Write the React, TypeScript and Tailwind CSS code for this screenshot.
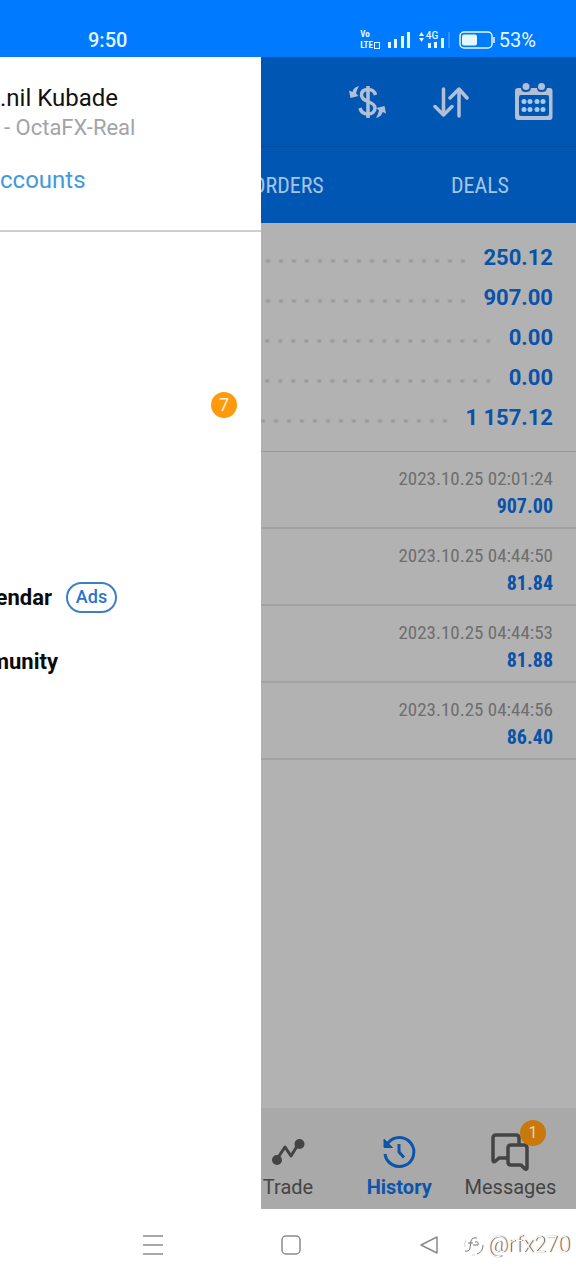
import type { ReactNode } from "react";
import { clsx } from "clsx";

const SUMMARY = ["250.12", "907.00", "0.00", "0.00", "1 157.12"];

const DEALS = [
  { time: "2023.10.25 02:01:24", amount: "907.00" },
  { time: "2023.10.25 04:44:50", amount: "81.84" },
  { time: "2023.10.25 04:44:53", amount: "81.88" },
  { time: "2023.10.25 04:44:56", amount: "86.40" },
];

const CONDENSED = "font-['Roboto_Condensed','Liberation_Sans_Narrow',Roboto,sans-serif]";

function StatusBar() {
  return (
    <div className="flex h-[57px] items-end justify-between bg-[#007aff] pr-10 pb-[5px] pl-[88px] text-[#e6f8ff]">
      <span className="text-xl leading-6 font-medium">9:50</span>
      <div className="flex items-center gap-2">
        <div className={clsx("flex flex-col text-[9px] leading-[11px] font-bold", CONDENSED)}>
          <span>Vo</span>
          <span className="flex items-center gap-px">LTE<span className="h-[7px] w-[6px] border border-current" /></span>
        </div>
        <svg width="23" height="16" viewBox="0 0 23 16" fill="currentColor">
          <rect x="0" y="10" width="3" height="6" />
          <rect x="6" y="7" width="3" height="9" />
          <rect x="13" y="4" width="3" height="12" />
          <rect x="19" y="0" width="3" height="16" />
        </svg>
        <div className="relative flex h-4 w-8 items-end">
          <svg width="32" height="16" viewBox="0 0 32 16" fill="currentColor">
            <path d="M0 4l2.500-4L5 4zM0 6l2.500 4L5 6z" />
            <rect x="9" y="11" width="3" height="5" />
            <rect x="15" y="10" width="3" height="6" />
            <rect x="22" y="6" width="3" height="10" />
            <rect x="29" y="0" width="2" height="16" opacity="0.2" />
          </svg>
          <span className="absolute -top-px left-[7px] text-[10px] leading-[10px] font-medium">4G</span>
        </div>
        <svg width="36" height="18" viewBox="0 0 36 18" fill="none" stroke="currentColor">
          <rect x="1" y="1" width="32" height="16" rx="4" strokeWidth="1.5" />
          <rect x="3" y="3.500" width="15" height="11" rx="2" fill="currentColor" stroke="none" />
          <path d="M35 6v6" strokeWidth="1.500" />
        </svg>
        <span className="-ml-1 text-xl leading-6">53%</span>
      </div>
    </div>
  );
}

function CurrencyIcon() {
  return (
    <svg width="40" height="36" viewBox="0 0 40 36" fill="none" stroke="currentColor" strokeWidth="3.5">
      <path d="M20 2v32" />
      <path d="M27.500 11c-1-4-4-5.500-7.500-5.500-4 0-6.500 2-6.500 5.500 0 4 3.500 5.300 6.500 6.500 4 1.500 7 3 7 6.500 0 4-3 6-7 6s-7-2-8-6" />
      <path d="M11 2C7 3 5 5 4.500 8L1 6.500 2.500 14l8-2-2.500-2.500C8.500 7 9.500 4.500 11 2z" fill="currentColor" stroke="none" />
      <path d="M28 34c4-1 6-3 6.500-6l3.500 1.500L36.500 22l-8 2 2.500 2.500c-.5 2.500-1.500 5-3 7.500z" fill="currentColor" stroke="none" />
    </svg>
  );
}

function SortIcon() {
  return (
    <svg width="36" height="32" viewBox="0 0 36 32" fill="none" stroke="currentColor" strokeWidth="3.5" strokeLinecap="round" strokeLinejoin="round">
      <path d="M10.500 3v26M2 20.500l8.500 8.500 8.500-8.500" />
      <path d="M26 30V3M17 12l9-9 8 9" />
    </svg>
  );
}

function CalendarIcon() {
  return (
    <svg width="40" height="38" viewBox="0 0 40 38" fill="none">
      <path d="M4 5h3c.5 3.500 2 4 5 4s4.500-1 5-4h6c.5 3.500 2 4 5 4s4.500-1 5-4h2.500q3 0 3 3v26q0 3-3 3H4q-3 0-3-3V8q0-3 3-3z" fill="currentColor" />
      <rect x="5" y="12" width="30" height="21" rx="2" fill="#0057b3" />
      <circle cx="12" cy="3.500" r="3.500" fill="currentColor" />
      <circle cx="27.500" cy="3.500" r="3.500" fill="currentColor" />
      {[10, 16, 23, 29].map((x) => (
        <g key={x} fill="#a9c8ea">
          <circle cx={x} cy="18.500" r="2.500" />
          <circle cx={x} cy="26.500" r="2.500" />
        </g>
      ))}
    </svg>
  );
}

function TradeIcon() {
  return (
    <svg width="36" height="36" viewBox="0 0 36 36" fill="none" stroke="currentColor" strokeWidth="3" strokeLinejoin="round">
      <path d="M7 25l8-12 6 9 8-13" />
      <circle cx="7" cy="26" r="3.500" fill="currentColor" />
      <circle cx="29.500" cy="10" r="3.500" fill="currentColor" />
    </svg>
  );
}

function HistoryIcon() {
  return (
    <svg width="36" height="36" viewBox="0 0 36 36" fill="none" stroke="currentColor" strokeWidth="3" strokeLinejoin="round">
      <path d="M4 20a14.500 14.500 0 1 0 3-11" />
      <path d="M3 5v8.500h8.500z" fill="currentColor" strokeWidth="1" />
      <path d="M18 10v8l5 5.500" />
    </svg>
  );
}

function MessagesIcon() {
  return (
    <svg width="40" height="38" viewBox="0 0 40 38" fill="none" stroke="currentColor" strokeWidth="3.5" strokeLinejoin="round">
      <path d="M17 25H9l-4 3.500c-1 .5-2 0-2-1V5q0-3 3-3h20q3 0 3 3v6" />
      <path d="M21 12h13q3 0 3 3v20c0 1-1 1.500-2 1l-4-4H21q-3 0-3-3V15q0-3 3-3z" />
    </svg>
  );
}

function Drawer() {
  return (
    <aside className="absolute inset-y-0 left-0 flex w-[261px] flex-col overflow-hidden bg-white whitespace-nowrap">
      <div className="h-[175px] border-b-2 border-[#cfcfcf] pt-[26px] leading-[30px]">
        <p className="text-2xl leading-[30px] text-[#111111]">.nil Kubade</p>
        <p className="pl-1 text-[22px] leading-[30px] text-[#a3a3a8]">- OctaFX-Real</p>
        <a href="#accounts" className="mt-[22px] block text-2xl leading-[30px] text-[#4598dc]">ccounts</a>
      </div>
      <nav className="flex flex-col pt-[141px] text-[22px] font-bold text-[#0b0b0b]">
        <a href="#mailbox" className="flex h-16 items-center justify-end pr-6" aria-label="Mailbox">
          <span className="flex size-[26px] items-center justify-center rounded-full bg-[#ff9a0d] text-lg font-normal text-[#fff1d2]">7</span>
        </a>
        {/* labels run out past the left edge while the drawer slides */}
        <a href="#calendar" className="mt-32 flex h-16 items-center gap-[14px]">
          <span className="flex w-[52px] justify-end">endar</span>
          <span className="flex h-[31px] w-[51px] items-center justify-center rounded-full border-2 border-[#3b7fc8] text-lg font-medium text-[#2873cc]">Ads</span>
        </a>
        <a href="#community" className="flex h-16 items-center">
          <span className="flex w-[58px] justify-end">munity</span>
        </a>
      </nav>
    </aside>
  );
}

function NavItem({ label, icon, active, badge }: { label: string; icon: ReactNode; active?: boolean; badge?: string }) {
  return (
    <button className={clsx("relative flex flex-col items-center text-xl leading-6", active ? "font-bold text-[#0b55ad]" : "text-[#444444]")}>
      <span className="flex h-10 items-center">{icon}</span>
      <span className="mt-[3px]">{label}</span>
      {badge && (
        <span className="absolute -top-3 right-5 flex size-[26px] items-center justify-center rounded-full bg-[#c9790c] text-base text-[#e8d5b5]">{badge}</span>
      )}
    </button>
  );
}

export default function App() {
  return (
    <div className="flex min-h-screen flex-col bg-white font-[Roboto,sans-serif]">
      <StatusBar />

      <div className="relative flex flex-1 flex-col bg-[#b2b2b2]">
        {/* Header */}
        <header className="bg-[#0057b3] text-[#b3bfd4]">
          <div className="flex h-[89px] items-center justify-end gap-[45px] pr-[22px]">
            <button aria-label="Currency"><CurrencyIcon /></button>
            <button aria-label="Sort"><SortIcon /></button>
            <button aria-label="Calendar"><CalendarIcon /></button>
          </div>
          <div className={clsx("grid h-[77px] grid-cols-3 border-t border-[#004c9f] text-[22px] text-[#a5c4e5]", CONDENSED)}>
            <button className="col-start-2">ORDERS</button>
            <button>DEALS</button>
          </div>
        </header>

        {/* Balance summary */}
        <div className="border-b border-[#999999] py-[14px] pr-[23px] pl-[261px]">
          {SUMMARY.map((value, i) => (
            <div key={i} className="flex h-10 items-center">
              <span className="mt-2 mr-[14px] h-1 flex-1 bg-[radial-gradient(circle,#9a9a9a_1px,transparent_3px)] bg-[length:13px_4px] bg-right" />
              <span className="text-[22px] font-bold text-[#0a52a8]">{value}</span>
            </div>
          ))}
        </div>

        {/* Deals */}
        <ul className={clsx("flex-1", CONDENSED)}>
          {DEALS.map((deal) => (
            <li key={deal.time} className="flex flex-col items-end gap-px border-b-2 border-[#a2a2a2] pt-[13px] pr-[23px] pb-[7px] leading-[27px]">
              <span className="text-[19px] text-[#6e6e6e]">{deal.time}</span>
              <span className="text-xl leading-[27px] font-bold text-[#0a52a8]">{deal.amount}</span>
            </li>
          ))}
        </ul>

        {/* Bottom tabs */}
        <nav className="grid h-[101px] grid-cols-5 bg-[#a9a9a9] px-[10px] pt-6">
          <div className="col-span-2" />
          <NavItem label="Trade" icon={<TradeIcon />} />
          <NavItem label="History" icon={<HistoryIcon />} active />
          <NavItem label="Messages" icon={<MessagesIcon />} badge="1" />
        </nav>

        <Drawer />
      </div>

      {/* System navigation */}
      <div className="grid h-[71px] grid-cols-[163px_138px_138px_1fr] items-center text-[#8a8a8a]">
        <button aria-label="Recent apps" className="justify-self-end">
          <svg width="20" height="22" viewBox="0 0 20 22" stroke="currentColor" strokeWidth="1.5">
            <path d="M0 2h20M0 11h20M0 20h20" />
          </svg>
        </button>
        <button aria-label="Home" className="justify-self-end">
          <svg width="20" height="20" viewBox="0 0 20 20" fill="none" stroke="currentColor" strokeWidth="1.5">
            <rect x="1" y="1" width="18" height="18" rx="4" />
          </svg>
        </button>
        <button aria-label="Back" className="justify-self-end">
          <svg width="20" height="20" viewBox="0 0 20 20" fill="none" stroke="currentColor" strokeWidth="1.500" strokeLinejoin="round">
            <path d="M18 2v16L2 10z" />
          </svg>
        </button>
        <span className="flex items-center gap-1 justify-self-end pr-[6px] text-[22px] font-light text-white [text-shadow:1px_0px_1px_#222]">
          <svg width="20" height="22" viewBox="0 0 20 22" fill="none" stroke="#777777" strokeWidth="1">
            <path d="M1 17q4 1 5-3l1-7q1-4 6-3M4 9h5M11 8q4-1 3 3H9M13 20q6-2 6-9" />
            <path d="M2 6q-2 4-1 7M8 21h3" stroke="#d4d4d4" />
          </svg>
          @rfx270
        </span>
      </div>
    </div>
  );
}
